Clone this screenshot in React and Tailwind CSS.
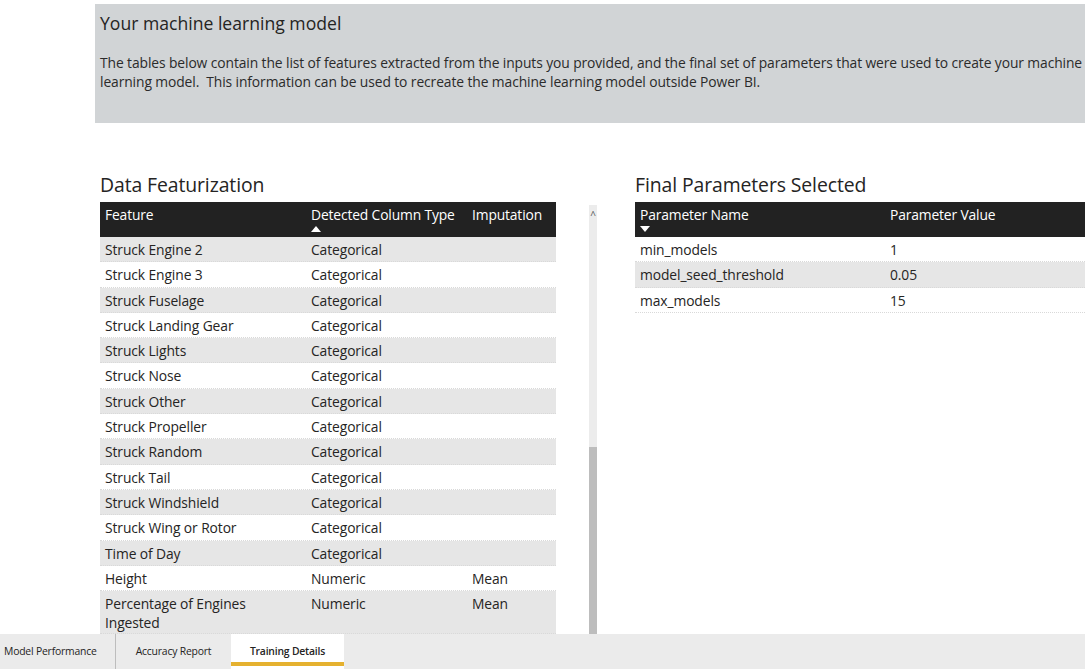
import React from "react";

const features = [
  ["Struck Engine 2", "Categorical", ""],
  ["Struck Engine 3", "Categorical", ""],
  ["Struck Fuselage", "Categorical", ""],
  ["Struck Landing Gear", "Categorical", ""],
  ["Struck Lights", "Categorical", ""],
  ["Struck Nose", "Categorical", ""],
  ["Struck Other", "Categorical", ""],
  ["Struck Propeller", "Categorical", ""],
  ["Struck Random", "Categorical", ""],
  ["Struck Tail", "Categorical", ""],
  ["Struck Windshield", "Categorical", ""],
  ["Struck Wing or Rotor", "Categorical", ""],
  ["Time of Day", "Categorical", ""],
  ["Height", "Numeric", "Mean"],
  ["Percentage of Engines Ingested", "Numeric", "Mean"],
];

const params = [
  ["min_models", "1"],
  ["model_seed_threshold", "0.05"],
  ["max_models", "15"],
];

const font = { fontFamily: '"Open Sans", "Noto Sans", sans-serif' };

const UpArrow = () => (
  <svg width="10" height="6" viewBox="0 0 10 6" className="mt-[2px]">
    <path d="M0 6 L5 0 L10 6 Z" fill="#fff" />
  </svg>
);

const DownArrow = () => (
  <svg width="10" height="6" viewBox="0 0 10 6" className="mt-[2px]">
    <path d="M0 0 L5 6 L10 0 Z" fill="#fff" />
  </svg>
);

const App = () => {
  return (
    <div className="w-[1085px] h-[669px] bg-white flex flex-col overflow-hidden text-[#252423]" style={font}>
      <div className="flex-1 min-h-0 pl-[95px] pt-[4px] overflow-hidden">
        {/* Header box */}
        <div className="h-[119px] bg-[#d1d4d6] pl-[5px] pr-[2px] pt-[6px]">
          <div className="text-[17.6px] leading-[26px]">Your machine learning model</div>
          <p className="mt-[17px] text-[13.85px] leading-[19px] text-[#2b2b2b] tracking-[-0.1px]">
            The tables below contain the list of features extracted from the inputs you provided, and the final set of parameters that were used to create your machine learning model.&nbsp; This information can be used to recreate the machine learning model outside Power BI.
          </p>
        </div>

        <div className="flex mt-[49px]">
          {/* Left: Data Featurization */}
          <div className="w-[502px] shrink-0 pl-[5px] flex flex-col">
            <div className="text-[19.4px] leading-[26px] mb-[4px] tracking-[-0.1px]">Data Featurization</div>
            <div className="flex">
              <div className="w-[456px] shrink-0">
                <div className="h-[35px] bg-[#222222] text-white text-[13.85px] flex pt-[3px] tracking-[-0.15px]">
                  <div className="w-[211px] pl-[5px]">Feature</div>
                  <div className="w-[161px] flex flex-col">
                    <span className="leading-[19px]">Detected Column Type</span>
                    <UpArrow />
                  </div>
                  <div className="flex-1">Imputation</div>
                </div>
                {features.map((f, i) => (
                  <div
                    key={f[0]}
                    className={`flex text-[13.85px] leading-[19px] border-b border-dotted border-[#d9d9d9] pt-[3px] tracking-[-0.1px] ${
                      i % 2 === 0 ? "bg-[#e6e6e6]" : "bg-white"
                    } ${i === 14 ? "h-[43px]" : "h-[25.3px]"}`}
                  >
                    <div className="w-[211px] pl-[5px] pr-[30px]">{f[0]}</div>
                    <div className="w-[161px]">{f[1]}</div>
                    <div className="flex-1">{f[2]}</div>
                  </div>
                ))}
              </div>
              {/* scrollbar */}
              <div className="ml-[33px] mt-[3px] w-[8px] h-[429px] bg-[#ececec] flex flex-col items-center">
                <span className="text-[10px] leading-[10px] text-[#555] mt-[5px]">^</span>
                <div className="mt-auto w-[8px] h-[187px] bg-[#bdbdbd]"></div>
              </div>
            </div>
          </div>

          {/* Right: Final Parameters */}
          <div className="ml-[38px] flex-1 flex flex-col">
            <div className="text-[19.4px] leading-[26px] mb-[4px] tracking-[-0.1px]">Final Parameters Selected</div>
            <div className="h-[35px] bg-[#222222] text-white text-[13.85px] flex pt-[3px] tracking-[-0.15px]">
              <div className="w-[255px] pl-[5px] flex flex-col">
                <span className="leading-[19px]">Parameter Name</span>
                <DownArrow />
              </div>
              <div className="flex-1">Parameter Value</div>
            </div>
            {params.map((p, i) => (
              <div
                key={p[0]}
                className={`flex h-[25.3px] text-[13.85px] leading-[19px] pt-[3px] border-b border-dotted border-[#d9d9d9] tracking-[-0.1px] ${
                  i % 2 === 1 ? "bg-[#e6e6e6]" : "bg-white"
                }`}
              >
                <div className="w-[255px] pl-[5px]">{p[0]}</div>
                <div className="flex-1">{p[1]}</div>
              </div>
            ))}
          </div>
        </div>
      </div>

      {/* Bottom tabs */}
      <div className="h-[35px] shrink-0 bg-[#ebebeb] flex text-[10.4px] text-[#252423] tracking-[-0.2px]">
        <div className="w-[116px] flex items-center pl-[4px] pt-[1px] border-r border-[#bdbdbd]">Model Performance</div>
        <div className="w-[115px] flex items-center justify-center pt-[1px]">Accuracy Report</div>
        <div className="w-[113px] bg-white flex flex-col">
          <div className="flex-1 flex items-center justify-center font-semibold pt-[8px]">Training Details</div>
          <div className="h-[4px] bg-[#e5b12f] mb-[3px]"></div>
        </div>
      </div>
    </div>
  );
};

export default App;
